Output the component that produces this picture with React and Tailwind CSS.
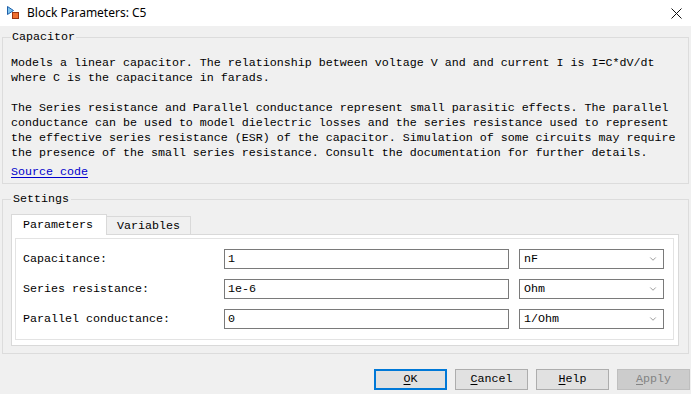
import { ChevronDown } from 'lucide-react';

const mono = { fontFamily: '"Liberation Mono", "Noto Sans CJK SC", monospace' };

const rows = [
  { label: 'Capacitance:', value: '1', unit: 'nF' },
  { label: 'Series resistance:', value: '1e-6', unit: 'Ohm' },
  { label: 'Parallel conductance:', value: '0', unit: '1/Ohm' },
];

const BlockIcon = () => (
  <svg width="14" height="14" viewBox="0 0 14 14" className="shrink-0 block">
    <path d="M1.5 0.5 L1.5 8.5 L7.5 4.5 Z" fill="#7fc4ee" stroke="#1f5fa8" strokeWidth="1" />
    <rect x="6.5" y="6.5" width="6" height="6" fill="#f07030" stroke="#9a3410" strokeWidth="1" />
  </svg>
);

const Btn = ({ children, first, rest, primary, disabled }) => (
  <button
    className={`w-[73px] h-[21px] flex items-center justify-center pt-[1px] text-[11.67px] leading-none ${
      primary
        ? 'border-2 border-[#0078d7] bg-[#e1e1e1] text-black'
        : disabled
        ? 'border border-[#bfbfbf] bg-[#cccccc] text-[#838383]'
        : 'border border-[#adadad] bg-[#e1e1e1] text-black'
    }`}
    style={mono}
  >
    <span className="underline underline-offset-2">{first}</span>
    {rest}
  </button>
);

const App = () => {
  return (
    <div className="w-[691px] h-[394px] overflow-hidden bg-[#f0f0f0] text-black" style={mono}>
      {/* title bar */}
      <div className="h-[26px] bg-white flex items-center pl-[6px] pr-[8px]">
        <BlockIcon />
        <span
          className="ml-[7px] text-[12px] text-black"
          style={{ fontFamily: '"Noto Sans", "Noto Sans CJK SC", sans-serif' }}
        >
          Block Parameters: C5
        </span>
        <svg width="11" height="11" viewBox="0 0 11 11" className="ml-auto mr-[1px]">
          <path d="M0.5 0.5 L10.5 10.5 M10.5 0.5 L0.5 10.5" stroke="#111" strokeWidth="1" />
        </svg>
      </div>

      {/* Capacitor description */}
      <fieldset className="mx-[2px] mt-[4px] border border-[#dcdcdc] pl-2 pr-2 pt-[11px] pb-[3px] text-[11.67px] leading-[15px]">
        <legend className="px-[1px] leading-[15px]">Capacitor</legend>
        <p className="whitespace-nowrap">
          Models a linear capacitor. The relationship between voltage V and and current I is I=C*dV/dt
          <br />
          where C is the capacitance in farads.
        </p>
        <p className="whitespace-nowrap mt-[15px]">
          The Series resistance and Parallel conductance represent small parasitic effects. The parallel
          <br />
          conductance can be used to model dielectric losses and the series resistance used to represent
          <br />
          the effective series resistance (ESR) of the capacitor. Simulation of some circuits may require
          <br />
          the presence of the small series resistance. Consult the documentation for further details.
        </p>
        <a className="inline-block mt-[4px] text-[#0000cc] underline underline-offset-2">Source code</a>
      </fieldset>

      {/* Settings */}
      <fieldset className="mx-[2px] mt-[8px] border border-[#dcdcdc] pl-2 pr-[9px] pt-[7px] pb-[7px] text-[11.67px] leading-[15px]">
        <legend className="px-[2px] leading-[15px]">Settings</legend>
        <div className="flex items-end">
          <div className="relative z-10 -mb-px w-[96px] h-[21px] border border-b-0 border-[#d9d9d9] bg-white pl-[11px] pt-[3px]">
            Parameters
          </div>
          <div className="w-[84px] h-[18px] border border-l-0 border-b-0 border-[#d9d9d9] bg-[#f0f0f0] pl-[10px] pt-[2px]">
            Variables
          </div>
        </div>
        <div className="border border-[#d9d9d9] bg-white pt-[3px] pl-[3px] pr-[4px] pb-[5px]">
          <div className="border border-[#e3e3e3] pl-[7px] pr-[9px] py-[10px] flex flex-col gap-[10px]">
            {rows.map(row => (
              <div key={row.label} className="flex items-center h-[20px]">
                <div className="flex-1 whitespace-nowrap pt-[1px]">{row.label}</div>
                <div className="w-[285px] h-[20px] border border-[#7a7a7a] bg-white pl-[3px] pt-[1px] flex items-center">
                  {row.value}
                </div>
                <div className="ml-[10px] w-[145px] h-[20px] border border-[#7a7a7a] bg-white pl-[4px] pr-[5px] flex items-center">
                  <span className="flex-1 pt-[1px]">{row.unit}</span>
                  <ChevronDown className="w-[10px] h-[10px] text-[#606060]" strokeWidth={1.5} />
                </div>
              </div>
            ))}
          </div>
        </div>
      </fieldset>

      {/* buttons */}
      <div className="mt-[15px] flex justify-end gap-[8px] pr-[1px]">
        <Btn primary first="O" rest="K" />
        <Btn first="C" rest="ancel" />
        <Btn first="H" rest="elp" />
        <Btn disabled first="A" rest="pply" />
      </div>
    </div>
  );
};

export default App;
